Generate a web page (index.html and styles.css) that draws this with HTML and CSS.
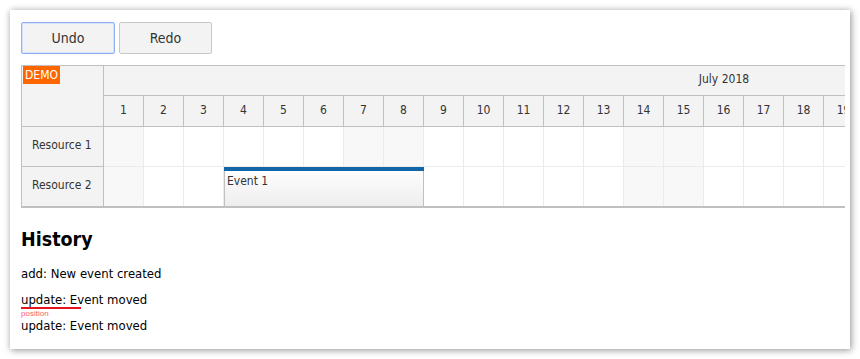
FILE: index.html
```html
<!DOCTYPE html>
<html lang="en">
<head>
    <meta charset="UTF-8">
    <title>Scheduler Undo/Redo</title>
    <link rel="stylesheet" href="styles.css">
</head>
<body>
    <div class="page">
        <div class="toolbar">
            <button class="btn btn-focus">Undo</button>
            <button class="btn">Redo</button>
        </div>

        <div class="scheduler">
            <div class="row-headers">
                <div class="corner"><span class="demo">DEMO</span></div>
                <div class="row-header">Resource 1</div>
                <div class="row-header">Resource 2</div>
            </div>
            <div class="timeline">
                <div class="timeline-inner">
                    <div class="month">July 2018</div>
                    <div class="days" id="days"></div>
                    <div class="row" id="row1"></div>
                    <div class="row" id="row2">
                        <div class="event">
                            <div class="event-bar"></div>
                            <div class="event-text">Event 1</div>
                        </div>
                    </div>
                </div>
            </div>
        </div>

        <div class="history">
            <h2>History</h2>
            <div class="item">add: New event created</div>
            <div class="item marked">update: Event moved<span class="mark-label">position</span></div>
            <div class="item">update: Event moved</div>
        </div>
    </div>

    <script>
        // July 2018 starts on a Sunday
        var weekend = [1, 7, 8, 14, 15, 21, 22, 28, 29];
        var days = document.getElementById('days');
        var rows = [document.getElementById('row1'), document.getElementById('row2')];

        for (var d = 1; d <= 31; d++) {
            var h = document.createElement('div');
            h.className = 'day';
            h.textContent = d;
            days.appendChild(h);

            rows.forEach(function (row) {
                var c = document.createElement('div');
                c.className = 'cell' + (weekend.indexOf(d) > -1 ? ' weekend' : '');
                row.insertBefore(c, row.querySelector('.event'));
            });
        }
    </script>
</body>
</html>
```

FILE: styles.css
```css
* {
    box-sizing: border-box;
}

body {
    margin: 0;
    background: #fff;
    font-family: "DejaVu Sans Condensed", "DejaVu Sans", sans-serif;
    font-size: 13px;
    color: #000;
}

.page {
    margin: 10px;
    width: 840px;
    height: 339px;
    padding: 12px 11px;
    background: #fff;
    box-shadow: 1px 1px 7px rgba(0, 0, 0, 0.45);
    overflow: hidden;
}

.toolbar {
    display: flex;
    gap: 4px;
}

.btn {
    width: 94px;
    height: 32px;
    background: #f3f3f3;
    border: 1px solid #c8c8c8;
    border-radius: 2px;
    font-family: inherit;
    font-size: 14px;
    color: #333;
    padding: 0;
}

.btn + .btn {
    width: 93px;
}

.btn-focus {
    border-color: #8fb1f3;
    box-shadow: inset 0 0 0 1px #d3e1fb;
}

/* Scheduler */
.scheduler {
    display: flex;
    width: 824px;
    margin-top: 11px;
    border-top: 1px solid #c0c0c0;
    border-left: 1px solid #c0c0c0;
    border-bottom: 1px solid #c0c0c0;
    font-size: 12px;
    color: #333;
}

.row-headers {
    width: 82px;
    flex: none;
    border-right: 1px solid #c0c0c0;
    background: #f3f3f3;
}

.corner {
    height: 61px;
    border-bottom: 1px solid #c0c0c0;
}

.demo {
    display: inline-block;
    background: #ff6600;
    color: #fff;
    font-size: 12px;
    line-height: 18px;
    padding: 0 2px;
    margin-left: 1px;
}

.row-header {
    height: 40px;
    line-height: 37px;
    padding-left: 10px;
    border-bottom: 1px solid #c0c0c0;
}

.timeline {
    flex: 1;
    overflow: hidden;
}

.timeline-inner {
    width: 1240px;
}

.month {
    height: 30px;
    line-height: 27px;
    text-align: center;
    background: #f3f3f3;
    border-bottom: 1px solid #c0c0c0;
}

.days {
    display: flex;
    height: 31px;
    background: #f3f3f3;
    border-bottom: 1px solid #c0c0c0;
}

.day {
    width: 40px;
    flex: none;
    line-height: 29px;
    text-align: center;
    border-right: 1px solid #c0c0c0;
}

.row {
    display: flex;
    height: 40px;
    position: relative;
    border-bottom: 1px solid #ebebeb;
}

#row2 {
    border-bottom-color: #c0c0c0;
}

.cell {
    width: 40px;
    flex: none;
    border-right: 1px solid #ebebeb;
}

.cell.weekend {
    background: #f8f8f8;
}

.event {
    position: absolute;
    left: 120px;
    top: 0;
    width: 200px;
    height: 39px;
    background: linear-gradient(#ffffff, #eeeeee);
    border-left: 1px solid #c0c0c0;
    border-right: 1px solid #c0c0c0;
}

.event-bar {
    height: 4px;
    margin: 0 -1px;
    background: #1066a8;
}

.event-text {
    padding: 3px 2px;
    color: #333;
}

/* History */
.history h2 {
    font-size: 19.5px;
    margin: 20px 0 14px;
}

.item {
    margin-bottom: 9px;
    line-height: 17px;
}

.marked {
    position: relative;
}

.marked::after {
    content: '';
    position: absolute;
    left: 0;
    top: 16px;
    width: 60px;
    height: 2px;
    background: #e8141c;
}

.mark-label {
    position: absolute;
    left: 0;
    top: 19px;
    font-family: "Liberation Sans", sans-serif;
    font-size: 8px;
    line-height: 8px;
    color: #ff5c6c;
}
```
